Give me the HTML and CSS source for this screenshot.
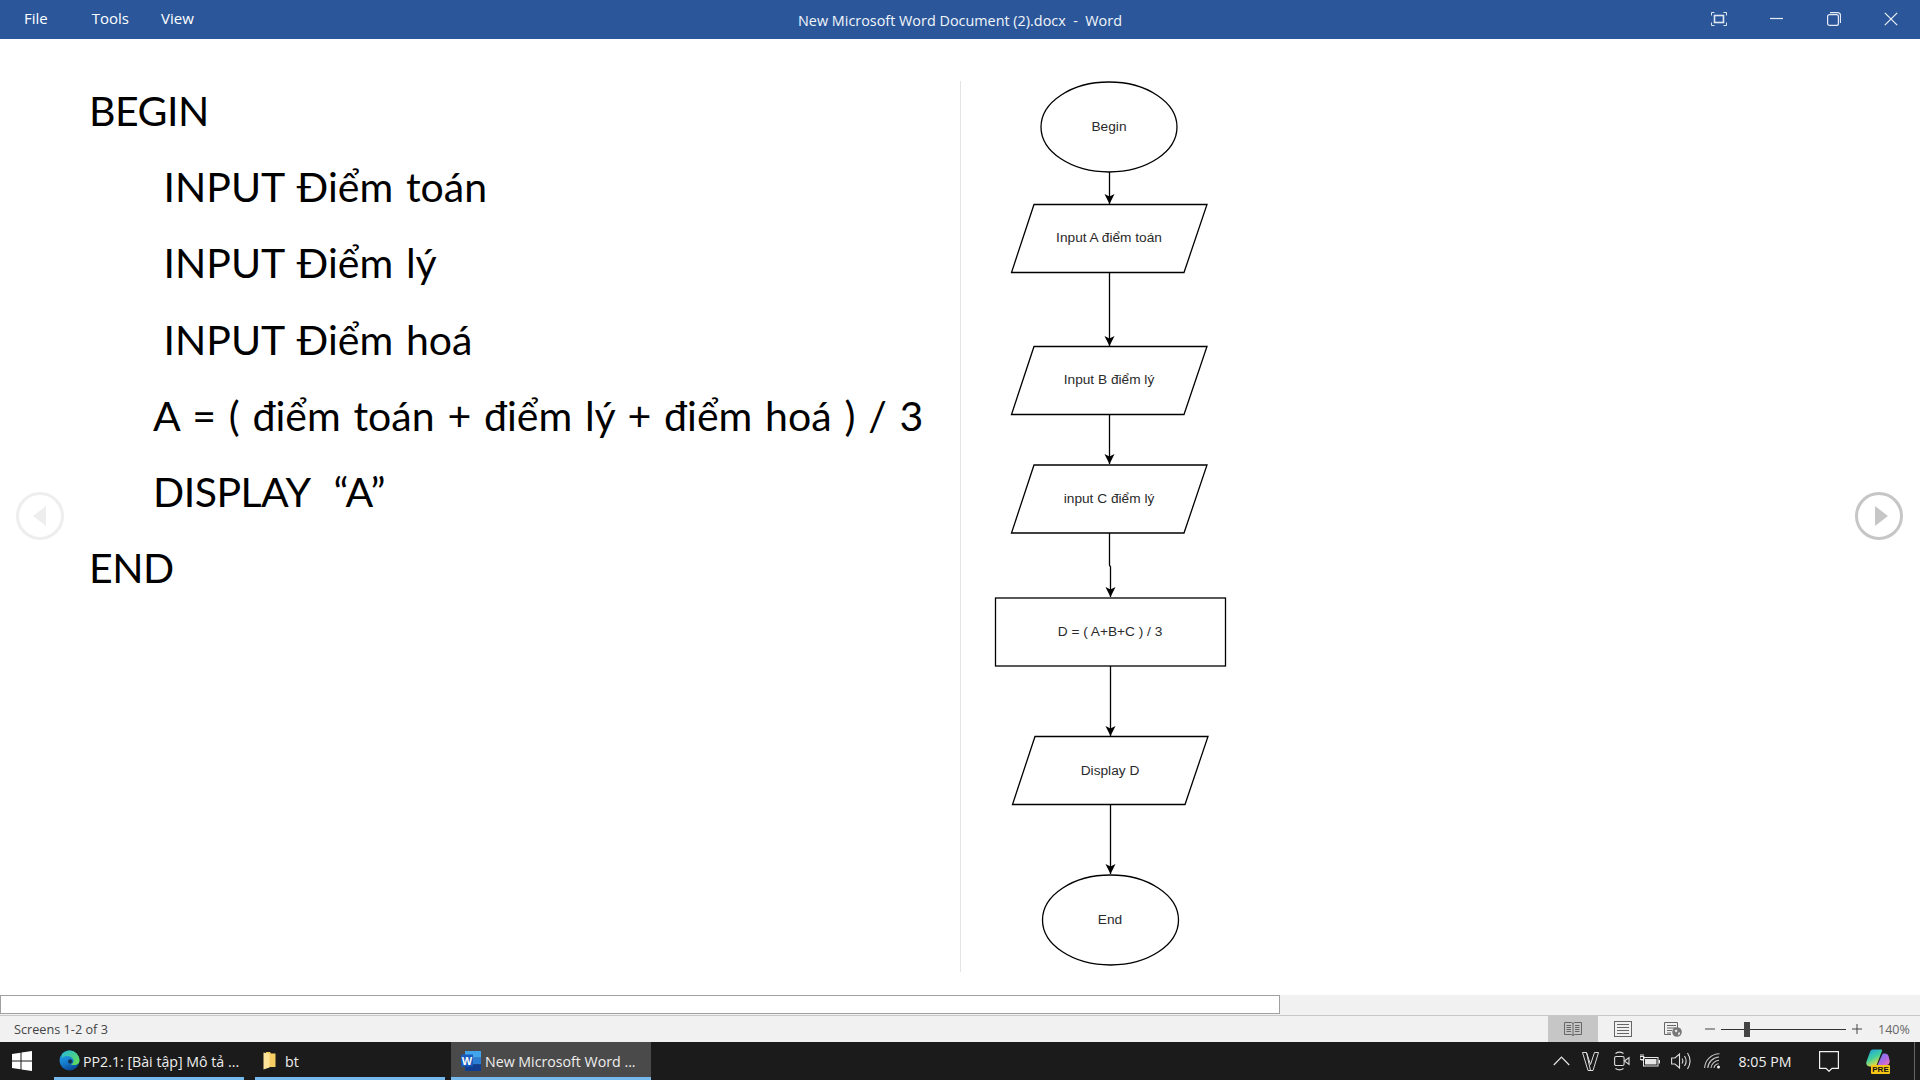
FILE: index.html
```html
<!DOCTYPE html>
<html lang="en">
<head>
  <meta charset="UTF-8" />
  <meta name="viewport" content="width=device-width, initial-scale=1.0" />
  <title>New Microsoft Word Document (2).docx - Word</title>
  <link rel="stylesheet" href="styles.css">
</head>
<body>

  <header class="titlebar">
    <nav class="menu">
      <span class="menu-file">File</span>
      <span class="menu-tools">Tools</span>
      <span class="menu-view">View</span>
    </nav>
    <div class="doc-title">New Microsoft Word Document (2).docx&nbsp; -&nbsp; Word</div>
    <div class="win-buttons">
      <svg width="16" height="14" viewBox="0 0 16 14" fill="none" stroke="#dfe7f3" stroke-width="1">
        <path d="M.5 3.500V.5h3M12.500.5h3v3M15.500 10.500v3h-3M3.500 13.500h-3v-3"/>
        <rect x="3.500" y="3.500" width="9" height="7" stroke-width="1.600"/>
      </svg>
      <svg width="14" height="14" viewBox="0 0 14 14" fill="none" stroke="#e6ecf5" stroke-width="1.200">
        <path d="M0 6.500h13"/>
      </svg>
      <svg width="14" height="14" viewBox="0 0 14 14" fill="none" stroke="#e6ecf5" stroke-width="1.200">
        <rect x=".6" y="2.600" width="10.800" height="10.800" rx="2"/>
        <path d="M3 .6h7.500a3 3 0 0 1 3 3V11"/>
      </svg>
      <svg width="14" height="14" viewBox="0 0 14 14" fill="none" stroke="#eef2f8" stroke-width="1.200">
        <path d="M.8.8l12.400 12.400M13.200.8L.8 13.200"/>
      </svg>
    </div>
  </header>

  <main class="reader">
    <section class="page-left">
      <p class="line caps">BEGIN</p>
      <p class="line indent-input">INPUT Điểm toán</p>
      <p class="line indent-input">INPUT Điểm lý</p>
      <p class="line indent-input">INPUT Điểm hoá</p>
      <p class="line indent-calc">A = ( điểm toán + điểm lý + điểm hoá ) / 3</p>
      <p class="line indent-calc caps">DISPLAY  “A”</p>
      <p class="line caps">END</p>
    </section>

    <section class="page-right">
      <svg class="flowchart" width="959" height="956" viewBox="961 39 959 956">
        <defs>
          <marker id="head" markerUnits="userSpaceOnUse" markerWidth="13" markerHeight="13" refX="11" refY="6.500" orient="auto">
            <path d="M1 1.500L11 6.500L1 11.500L3.500 6.500z" fill="#000"/>
          </marker>
        </defs>
        <g fill="none" stroke="#000" stroke-width="1.300">
          <path d="M1109.500 172V204" marker-end="url(#head)"/>
          <path d="M1109.500 272V346" marker-end="url(#head)"/>
          <path d="M1109.500 415V464" marker-end="url(#head)"/>
          <path d="M1109.500 533V565L1110.500 567V597" marker-end="url(#head)"/>
          <path d="M1110.500 666V736" marker-end="url(#head)"/>
          <path d="M1110.500 805V874" marker-end="url(#head)"/>
          <ellipse cx="1109" cy="127" rx="68" ry="45"/>
          <polygon points="1034,204.500 1207,204.500 1184,272.500 1011.500,272.500"/>
          <polygon points="1034,346.500 1207,346.500 1184,414.500 1011.500,414.500"/>
          <polygon points="1034,465 1207,465 1184,533 1011.500,533"/>
          <rect x="995.500" y="598" width="230" height="68"/>
          <polygon points="1035,736.500 1208,736.500 1185,804.500 1012.500,804.500"/>
          <ellipse cx="1110.500" cy="920" rx="68" ry="45"/>
        </g>
        <g class="chart-text">
          <text x="1109" y="130.500">Begin</text>
          <text x="1109" y="242">Input A điểm toán</text>
          <text x="1109" y="384">Input B điểm lý</text>
          <text x="1109" y="502.500">input C điểm lý</text>
          <text x="1110" y="636">D = ( A+B+C ) / 3</text>
          <text x="1110" y="774.500">Display D</text>
          <text x="1110" y="923.500">End</text>
        </g>
      </svg>
    </section>

    <svg class="nav-arrow nav-prev" width="50" height="50" viewBox="0 0 50 50">
      <circle cx="25" cy="25" r="22.500" fill="#fff" stroke="#eeeeee" stroke-width="3"/>
      <path d="M31 15v20L18 25z" fill="#eeeeee"/>
    </svg>
    <svg class="nav-arrow nav-next" width="50" height="50" viewBox="0 0 50 50">
      <circle cx="25" cy="25" r="22.500" fill="#fff" stroke="#c6c6c6" stroke-width="3"/>
      <path d="M21 15v20L34 25z" fill="#c6c6c6"/>
    </svg>
  </main>

  <div class="hscroll"><div class="hscroll-thumb"></div></div>

  <footer class="statusbar">
    <span class="screens">Screens 1-2 of 3</span>
    <div class="views">
      <div class="view view-active">
        <svg width="18" height="16" viewBox="0 0 18 16" fill="none" stroke="#666" stroke-width="1">
          <path d="M.5 1.500h7l1.500 1 1.500-1h7v12h-7l-1.500 1-1.500-1h-7zM9 2.500V15"/>
          <path d="M2.500 4.500h4.500M2.500 6.500h4.500M2.500 8.500h4.500M2.500 10.500h4.500M11 4.500h4.500M11 6.500h4.500M11 8.500h4.500M11 10.500h4.500"/>
        </svg>
      </div>
      <div class="view">
        <svg width="18" height="16" viewBox="0 0 18 16" fill="none" stroke="#666" stroke-width="1">
          <rect x=".5" y=".5" width="17" height="15"/>
          <path d="M3 3.500h12M3 6.500h12M3 9.500h12M3 12.500h12"/>
        </svg>
      </div>
      <div class="view">
        <svg width="18" height="16" viewBox="0 0 18 16">
          <path d="M.5 1.500h13v7M.5 1.500v12h6.500M3 4.500h9M3 7h9M3 9.500h5M3 12h4" fill="none" stroke="#666"/>
          <circle cx="13" cy="11" r="4.800" fill="#777"/>
          <path d="M10.500 9.500l2-1 1 1.500-1.500 1.500zM14 12l1.500-1 .5 2-1.500 1.500z" fill="#eee"/>
        </svg>
      </div>
    </div>
    <div class="zoom">
      <svg class="zoom-sign" width="10" height="10" viewBox="0 0 10 10"><path d="M0 5h10" stroke="#444"/></svg>
      <div class="zoom-track"><div class="zoom-thumb"></div></div>
      <svg class="zoom-sign" width="10" height="10" viewBox="0 0 10 10"><path d="M0 5h10M5 0v10" stroke="#444"/></svg>
    </div>
    <span class="zoom-value">140%</span>
  </footer>

  <div class="taskbar">
    <div class="start">
      <svg width="20" height="20" viewBox="0 0 20 20" fill="#fff">
        <path d="M0 3l8.500-1.200V9.500H0zM9.500 1.600L20 0v9.500H9.500zM0 10.500h8.500v7.700L0 17zM9.500 10.500H20V20L9.500 18.400z"/>
      </svg>
    </div>
    <div class="task task-edge">
      <svg width="21" height="21" viewBox="0 0 21 21">
        <defs>
          <linearGradient id="edge-a" x1="0" y1="0" x2=".4" y2="1">
            <stop offset="0" stop-color="#2aa8ea"/>
            <stop offset=".6" stop-color="#1580d0"/>
            <stop offset="1" stop-color="#0b4f9c"/>
          </linearGradient>
          <linearGradient id="edge-b" x1="0" y1="0" x2="1" y2="1">
            <stop offset="0" stop-color="#22b8d8"/>
            <stop offset="1" stop-color="#6be04c"/>
          </linearGradient>
        </defs>
        <circle cx="10.500" cy="10.500" r="10" fill="url(#edge-a)"/>
        <path d="M3 4C5 1.700 7.500.5 10.500.5c5.500 0 10 4.500 10 10 0 3-2.500 4.500-5.500 4.500-1.500 0-3-.5-3.500-1 2.500 0 3.500-2 3-4C13.500 7 10 5.500 7 6 5.500 6.300 4 7 3 8z" fill="url(#edge-b)"/>
        <path d="M9 11.500c0-1.500 1.200-2.300 2.500-2.200 1.300.2 1.900 1.300 1.700 2.500-.2.700-.7 1.400-1.500 1.700-1.200.3-2.700-.5-2.700-2z" fill="#16324f"/>
      </svg>
      <span class="task-label">PP2.1: [Bài tập] Mô tả ...</span>
    </div>
    <div class="task task-folder">
      <svg width="13" height="21" viewBox="0 0 13 21">
        <path d="M3 2h4l1 1.500h4.500V17H3z" fill="#f5cd62"/>
        <path d="M.5 2.500L6.500 4v13.500l-6 2z" fill="#fde49a"/>
      </svg>
      <span class="task-label">bt</span>
    </div>
    <div class="task task-word">
      <svg width="20" height="20" viewBox="0 0 20 20">
        <rect x="4" y="0" width="16" height="6.700" fill="#41a5ee"/>
        <rect x="4" y="6.700" width="16" height="6.700" fill="#2b7cd3"/>
        <rect x="4" y="13.300" width="16" height="6.700" fill="#103f91"/>
        <rect x="0" y="3.500" width="12" height="12" fill="#185abd"/>
        <text class="word-letter" x="6" y="13.500">W</text>
      </svg>
      <span class="task-label">New Microsoft Word ...</span>
    </div>
    <div class="tray">
      <div class="tray-cell">
        <svg width="17" height="10" viewBox="0 0 17 10" fill="none" stroke="#e4e4e4" stroke-width="1.200"><path d="M.8 9L8.500 1.200 16.200 9"/></svg>
      </div>
      <div class="tray-cell">
        <svg width="17" height="19" viewBox="0 0 17 19" fill="none" stroke="#dcdcdc" stroke-width="1"><path d="M.5.5h4l4 12 4-12h4l-5.500 18h-5zM4.500.5l4 18"/></svg>
      </div>
      <div class="tray-cell">
        <svg width="16" height="20" viewBox="0 0 16 20" fill="none" stroke="#dcdcdc" stroke-width="1.100">
          <rect x=".6" y="5.500" width="9.500" height="9" rx="1.500"/>
          <path d="M10.500 10L15 6.500v7zM1.500 2.500C4 .8 7 .8 9.500 2.500M1.500 17.500c2.500 1.700 5.500 1.700 8 0"/>
        </svg>
      </div>
      <div class="tray-cell">
        <svg width="20" height="14" viewBox="0 0 20 14">
          <rect x="3.500" y="3.500" width="14.500" height="8.500" fill="none" stroke="#e6e6e6"/>
          <rect x="5" y="5" width="11.500" height="5.500" fill="#e6e6e6"/>
          <rect x="18.500" y="6" width="1.500" height="3.500" fill="#e6e6e6"/>
          <path d="M0 2.500h4v3H0zM1 0v2.500M3 0v2.500M2 5.500V7" fill="none" stroke="#e6e6e6"/>
        </svg>
      </div>
      <div class="tray-cell">
        <svg width="20" height="20" viewBox="0 0 20 20" fill="none" stroke="#dcdcdc" stroke-width="1.100">
          <path d="M.6 7h3.400L8.500 3v14L4 13H.6zM11 7.500c1 1.500 1 3.500 0 5M13.500 5c2 3 2 7 0 10M16.500 2c3.200 5 3.200 11 0 16"/>
        </svg>
      </div>
      <div class="tray-cell">
        <svg width="17" height="16" viewBox="0 0 17 16" fill="none" stroke="#c4c4c4" stroke-width="1.100">
          <path d="M.6 15C1 7.500 7 1 15.500.8M3.800 15C4 9.500 9 4.200 15 4M7 15c.3-3.500 3.500-7.500 8-7.800M10 15c.2-1.500 1.500-4 4.500-4.300"/>
          <circle cx="14.500" cy="14" r="1.500" fill="#eee" stroke="none"/>
        </svg>
      </div>
      <div class="tray-cell tray-time">8:05 PM</div>
      <div class="tray-cell">
        <svg width="20" height="21" viewBox="0 0 20 21" fill="none" stroke="#f0f0f0" stroke-width="1.200"><path d="M.6.600h18.800v16.800h-6.400L10 20.300l-3-2.900H.6z"/></svg>
      </div>
      <div class="tray-cell tray-copilot">
        <svg width="24" height="20" viewBox="0 0 24 20">
          <defs>
            <linearGradient id="cop-a" x1="0" y1="0" x2=".5" y2="1">
              <stop offset="0" stop-color="#1f9be8"/>
              <stop offset=".55" stop-color="#3fd0a0"/>
              <stop offset="1" stop-color="#f2dc3a"/>
            </linearGradient>
            <linearGradient id="cop-b" x1="0" y1="0" x2="1" y2="1">
              <stop offset="0" stop-color="#5a7cf0"/>
              <stop offset=".6" stop-color="#b568e4"/>
              <stop offset="1" stop-color="#f27ab0"/>
            </linearGradient>
          </defs>
          <path d="M7 .5h8c1 0 1.300.7 1 1.500L11 15c-.6 1.500-1.500 2.500-3.500 2.500H4c-3 0-4.500-2.500-3.500-5L4 3C4.700 1.300 5.500.5 7 .5z" fill="url(#cop-a)"/>
          <path d="M17 4.500h2c2 0 3 1 3.500 2.500l1 4c.7 2.500-.3 5-3 5H11.500l5-11c.1-.3.300-.5.500-.5z" fill="url(#cop-b)"/>
        </svg>
        <span class="pre-badge">PRE</span>
      </div>
    </div>
    <div class="show-desktop"></div>
  </div>

</body>
</html>
```

FILE: styles.css
```css
*, *::before, *::after {
  box-sizing: border-box;
}

body {
  margin: 0;
  height: 100vh;
  display: flex;
  flex-direction: column;
  overflow: hidden;
  background: #fff;
  font-family: "Open Sans", "Noto Sans", sans-serif;
}

svg {
  display: block;
}

.titlebar {
  height: 39px;
  flex: none;
  display: flex;
  align-items: center;
  position: relative;
  background-color: #2b579a;
  color: #fff;
  font-size: 15px;
}

.menu {
  display: flex;
  margin-top: -4px;
  padding-left: 24px;
}

.menu-tools {
  margin-left: 44px;
}

.menu-view {
  margin-left: 32px;
}

.doc-title {
  position: absolute;
  left: 0;
  right: 0;
  top: 11px;
  text-align: center;
  font-size: 14.400px;
  color: #f2f5fa;
}

.win-buttons {
  margin-left: auto;
  display: flex;
  align-items: center;
  gap: 43px;
  padding-right: 22px;
  margin-top: -1px;
}

.reader {
  flex: 1;
  display: flex;
  position: relative;
  min-height: 0;
}

.page-left {
  width: 961px;
  padding: 34px 0 0 89px;
  position: relative;
}

.page-left::after {
  content: "";
  position: absolute;
  top: 42px;
  right: 0;
  width: 1px;
  height: 891px;
  background-color: #e4e4e4;
}

.line {
  margin: 0;
  height: 76.200px;
  line-height: 76.200px;
  font-family: Lato, "Open Sans", sans-serif;
  font-size: 41px;
  word-spacing: 2.300px;
  color: #000;
  white-space: pre;
}

.caps {
  letter-spacing: -0.500px;
}

.indent-input {
  padding-left: 74.500px;
}

.indent-calc {
  padding-left: 64px;
}

.page-right {
  flex: 1;
}

.chart-text {
  font-family: "Liberation Sans", sans-serif;
  font-size: 13.700px;
  fill: #2a2a2a;
  text-anchor: middle;
}

.nav-arrow {
  position: absolute;
  top: 452px;
}

.nav-prev {
  left: 15px;
}

.nav-next {
  left: 1854px;
}

.hscroll {
  height: 20px;
  flex: none;
  background-color: #f1f1f1;
}

.hscroll-thumb {
  width: 1280px;
  height: 19px;
  background-color: #fff;
  border: 1px solid #a0a0a0;
}

.statusbar {
  height: 27px;
  flex: none;
  display: flex;
  align-items: stretch;
  background-color: #f1f1f1;
  border-top: 1px solid #c8c8c8;
  font-size: 12.700px;
  color: #444;
}

.screens {
  align-self: center;
  padding-left: 14px;
}

.views {
  margin-left: auto;
  display: flex;
}

.view {
  width: 50px;
  display: flex;
  align-items: center;
  justify-content: center;
}

.view-active {
  background-color: #c6c6c6;
}

.zoom {
  width: 166px;
  padding-left: 7px;
  display: flex;
  align-items: center;
  gap: 6px;
}

.zoom-track {
  width: 125px;
  height: 1px;
  background-color: #333;
  position: relative;
}

.zoom-thumb {
  position: absolute;
  left: 23px;
  top: -7px;
  width: 6px;
  height: 15px;
  background-color: #444;
}

.zoom-value {
  align-self: center;
  width: 56px;
  padding-left: 14px;
  font-size: 12.500px;
  color: #666;
}

.taskbar {
  height: 38px;
  flex: none;
  display: flex;
  background-color: #1b1b1b;
  color: #eee;
  font-size: 14.200px;
}

.start {
  width: 54px;
  padding-left: 12px;
  display: flex;
  align-items: center;
}

.task {
  display: flex;
  align-items: center;
  border-bottom: 3px solid #76b9ed;
  padding-top: 2px;
}

.task-edge {
  width: 190px;
  padding-left: 5px;
  gap: 3px;
  margin-right: 11px;
}

.task-folder {
  width: 190px;
  padding-left: 8px;
  gap: 9px;
  margin-right: 6px;
}

.task-word {
  width: 200px;
  padding-left: 10px;
  gap: 4px;
  background-color: #4a4a4a;
}

.task-label {
  white-space: nowrap;
  margin-top: 2px;
}

.word-letter {
  font-family: "Liberation Sans", sans-serif;
  font-size: 11px;
  font-weight: bold;
  fill: #fff;
  text-anchor: middle;
}

.tray {
  margin-left: auto;
  display: grid;
  grid-template-columns: 30px 28px 36px 20px 42px 20px 86px 42px 56px;
  align-items: center;
  justify-items: center;
}

.tray-time {
  white-space: nowrap;
}

.tray-copilot {
  position: relative;
  margin-top: -5px;
}

.pre-badge {
  position: absolute;
  right: 0;
  bottom: -5px;
  width: 19px;
  height: 9px;
  line-height: 9px;
  background-color: #f5c518;
  border-radius: 1px;
  color: #111;
  font-family: "Liberation Sans", sans-serif;
  font-size: 8px;
  font-weight: bold;
  text-align: center;
}

.show-desktop {
  width: 1px;
  margin: 0 5px 0 8px;
  background-color: #666;
}
```
